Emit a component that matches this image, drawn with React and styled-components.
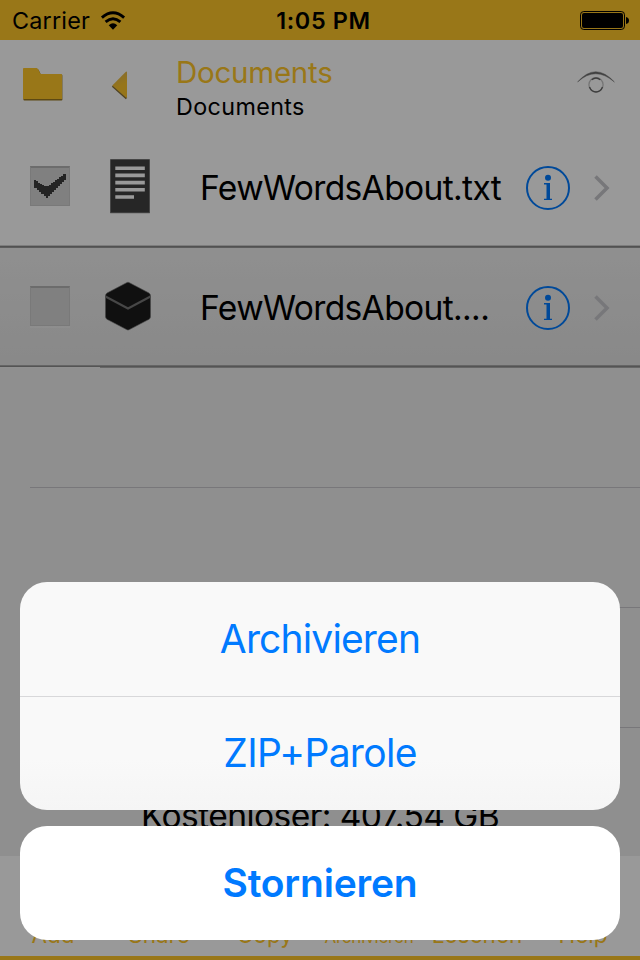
import React from "react";
import styled, { createGlobalStyle } from "styled-components";

const GlobalStyle = createGlobalStyle`
  * { box-sizing: border-box; }
  body { margin: 0; background: #999; }
  button { font: inherit; border: 0; padding: 0; background: none; }
`;

const gold = "#ffc628";

const Screen = styled.div`
  position: relative;
  width: 640px;
  height: 960px;
  overflow: hidden;
  display: flex;
  flex-direction: column;
  background: #efefef;
  color: #000;
  font-family: Inter, "Liberation Sans", sans-serif;
`;

const StatusBar = styled.div`
  height: 40px;
  flex: none;
  display: grid;
  grid-template-columns: 1fr auto 1fr;
  align-items: center;
  padding: 1px 10px 0 12px;
  background: ${gold};
  font-size: 23.4px;
  line-height: 40px;
`;

const Carrier = styled.div`
  display: flex;
  align-items: center;
  gap: 10px;
  letter-spacing: 0.2px;
`;

const Clock = styled.div`
  font-weight: 600;
  font-size: 23.4px;
  letter-spacing: 0.65px;
  margin-left: 5px;
`;

const BatterySlot = styled.div`
  display: flex;
  justify-content: flex-end;
`;

const Header = styled.header`
  height: 88px;
  flex: none;
  display: flex;
  align-items: flex-start;
  background: #fff;
  padding: 0 22px;
`;

const FolderSlot = styled.div`
  width: 88px;
  padding-top: 26px;
`;

const BackSlot = styled.div`
  width: 66px;
  padding-top: 30px;
`;

const Titles = styled.div`
  flex: 1;
  padding-top: 14px;
`;

const Title = styled.div`
  color: ${gold};
  font-size: 29.5px;
  line-height: 36px;
  letter-spacing: -0.24px;
`;

const Subtitle = styled.div`
  margin-top: 1px;
  font-size: 23.3px;
  line-height: 32px;
  letter-spacing: 0.38px;
`;

const EyeSlot = styled.div`
  padding: 29px 2px 0 0;
`;

const FileRow = styled.div`
  height: 120px;
  flex: none;
  display: flex;
  align-items: center;
  padding: 0 29px 0 30px;
  background: ${(p) => (p.$shaded ? "linear-gradient(#efefef, #e4e4e4)" : "#fff")};
`;

const RowRule = styled.div`
  height: 3px;
  flex: none;
  margin-top: -3px;
  z-index: 1;
  background: ${(p) =>
    p.$last
      ? "linear-gradient(90deg, #f1f1f1 100px, #aaa 100px) 0 2px / 100% 1px no-repeat, linear-gradient(#a8a8a8 0 1px, #8c8c8c 1px)"
      : "linear-gradient(#d0d0d0 0 1px, #888 1px 2px, #9a9a9a 2px)"};
`;

const Checkbox = styled.div`
  width: 40px;
  height: 40px;
  flex: none;
  margin-top: -4px;
  background: #d6d6d6;
  border: 1px solid #cacaca;
  border-top: 2px solid #b5b5b5;
  box-shadow: 0 2px 0 rgba(255, 255, 255, 0.22);
  svg { display: block; }
`;

const FileIcon = styled.div`
  width: 58px;
  height: 60px;
  margin: -4px 0 0 29px;
  flex: none;
  display: flex;
  justify-content: center;
  align-items: center;
`;

const FileName = styled.div`
  flex: 1;
  margin-left: 43px;
  font-size: 33.6px;
  line-height: 40px;
  letter-spacing: -0.65px;
  white-space: nowrap;
`;

const InfoSlot = styled.div`
  width: 44px;
  height: 44px;
  margin-right: 23px;
  flex: none;
`;

const ChevronSlot = styled.div`
  width: 18px;
  height: 28px;
  flex: none;
`;

const EmptyRow = styled.div`
  height: 120px;
  flex: none;
  margin-left: 30px;
  border-bottom: 1px solid #c8c7cc;
`;

const FreeSpace = styled.div`
  flex: 1;
  padding-top: 68px;
  text-align: center;
  font-size: 33.6px;
  line-height: 40px;
  letter-spacing: -0.6px;
  white-space: nowrap;
`;

const Toolbar = styled.nav`
  height: 104px;
  flex: none;
  display: grid;
  grid-template-columns: repeat(6, 106px);
  align-items: end;
  background: #fff;
  border-bottom: 4px solid ${gold};
  color: ${gold};
  text-align: center;
`;

const Tool = styled.div`
  font-size: ${(p) => (p.$small ? "17px" : "22.5px")};
  line-height: 30px;
  padding: ${(p) => (p.$small ? "0 4px 4px 0" : "0 0 6px")};
  letter-spacing: ${(p) => (p.$small ? "-0.2px" : "0")};
  white-space: nowrap;
`;

const Scrim = styled.div`
  position: absolute;
  inset: 0;
  z-index: 2;
  display: flex;
  flex-direction: column;
  justify-content: flex-end;
  gap: 16px;
  padding: 20px;
  background: rgba(0, 0, 0, 0.4);
`;

const SheetGroup = styled.div`
  display: flex;
  flex-direction: column;
  overflow: hidden;
  border-radius: 27px;
  background: ${(p) => (p.$solid ? "#fff" : "linear-gradient(#f9f9f9 78%, #f5f5f5)")};
`;

const SheetButton = styled.button`
  height: 114px;
  color: #007aff;
  font-size: 39px;
  font-weight: ${(p) => (p.$strong ? 600 : 400)};
  letter-spacing: ${(p) => (p.$strong ? "-0.2px" : "-0.85px")};
  padding-bottom: 1px;
  & + & {
    border-top: 1px solid #d8d8da;
    padding-bottom: 2px;
    letter-spacing: -0.7px;
  }
`;

const Wifi = () => (
  <svg width="26" height="20" viewBox="0 0 26 20" fill="none" stroke="#000">
    <path d="M1.9 6.7Q13-3 24.1 6.7" strokeWidth="2.9" />
    <path d="M5.6 10.9Q13 4.6 20.4 10.9" strokeWidth="2.9" />
    <path d="M8.7 14.2Q13 10.5 17.3 14.2L13 18.7Z" fill="#000" stroke="none" />
  </svg>
);

const Battery = () => (
  <svg width="50" height="20" viewBox="0 0 50 20">
    <rect x="0.5" y="0.5" width="44" height="18" rx="3.3" fill="none" stroke="#000" />
    <rect x="2" y="2" width="41" height="15" rx="2" />
    <path d="M46 6Q49 6.5 49 9.5T46 13Z" />
  </svg>
);

const Folder = () => (
  <svg width="42" height="38" viewBox="0 0 42 38">
    <path d="M1 3Q1 2 2 2H14Q15.5 2 16.3 3.5L18.5 8H39Q40 8 40 9V33.4Q40 34.2 39 34.2H2Q1 34.2 1 33.4Z" transform="translate(.4 .4)" fill="#9b7a20" />
    <path d="M1 3Q1 2 2 2H14Q15.5 2 16.3 3.5L18.5 8H39Q40 8 40 9V33H1Z" fill={gold} />
  </svg>
);

const Back = () => (
  <svg width="20" height="32" viewBox="0 0 20 32">
    <defs>
      <linearGradient id="backFill" x2="0.3" y2="1">
        <stop stopColor="#d5b05a" />
        <stop offset="0.65" stopColor="#fac32c" />
      </linearGradient>
    </defs>
    <path d="M2.5 16L16.5 28.5" stroke="#85703c" strokeWidth="2" />
    <path d="M2.3 15.5L15.6 2Q17 .8 17 2.5V27Q17 28.5 15.6 27.3Z" fill="url(#backFill)" />
  </svg>
);

const Eye = () => (
  <svg width="40" height="28" viewBox="0 0 40 28" fill="none">
    <path d="M1.6 13Q19.5-7.5 38.4 13Q19.5-3.5 1.6 13Z" fill="#6b6b6b" stroke="#777" strokeWidth=".5" />
    <circle cx="20" cy="15.8" r="7.1" stroke="#c4c4c4" strokeWidth="1.3" />
    <path d="M13.5 18Q15.5 23 20 23T26.5 18M15.7 10.8Q20 7.2 24.3 10.8" stroke="#666" strokeWidth="1.3" />
  </svg>
);

const Check = () => (
  <svg width="38" height="37" viewBox="0 0 38 37" shapeRendering="crispEdges">
    <path d="M3 12H5V13H7V15H9V16H11V17H13V18H18V17H20V15H22V14H24V12H26V11H28V9H30V8H32V6H35V12H33V14H31V16H29V18H27V20H25V22H23V24H21V26H19V28H17V30H15V28H13V26H10V24H8V22H6V20H3Z" fill="#3d3d3d" />
  </svg>
);

const TextDocument = () => (
  <svg width="46" height="56" viewBox="-5 -1 46 56">
    <rect x="0.6" y="0.6" width="38.8" height="53.2" fill="#404040" stroke="#666" strokeWidth=".8" />
    <path d="M5.3 9.3H34.8M5.3 16.4H34.8M5.3 23.6H34.8M5.3 30.8H34.8M5.3 38H24" stroke="#fff" strokeWidth="3.6" />
  </svg>
);

const ArchiveBox = () => (
  <svg width="50" height="54" viewBox="0 0 50 54">
    <path d="M24 3.5Q25 3 26 3.5L46 14Q47.5 15 47.5 17V37.5Q47.5 39.5 46 40.3L26 50.8Q25 51.3 24 50.8L4 40.3Q2.5 39.5 2.5 37.5V17Q2.5 15 4 14Z" fill="#1c1c1c" stroke="#777" strokeWidth=".6" />
    <path d="M2.5 17.5L25 29.5L47.5 17.5" fill="none" stroke="#777" strokeWidth="2" />
  </svg>
);

const Info = () => (
  <svg width="44" height="44" viewBox="0 0 44 44">
    <circle cx="22" cy="22" r="21" fill="none" stroke="#007aff" strokeWidth="2" />
    <circle cx="22" cy="11.8" r="3" fill="#007aff" />
    <path d="M18 17H24V32.7H26V34H18V32.7H20.5V18.5H18Z" fill="#007aff" />
  </svg>
);

const Chevron = () => (
  <svg width="18" height="28" viewBox="0 0 18 28" fill="none">
    <path d="M2.5 2.5L14 14L2.5 25.5" stroke="#c7c7cc" strokeWidth="3.6" />
  </svg>
);

const files = [
  { name: "FewWordsAbout.txt", checked: true, icon: <TextDocument /> },
  { name: "FewWordsAbout....", icon: <ArchiveBox />, shaded: true },
];

const tools = [
  { label: "Add" },
  { label: "Share" },
  { label: "Copy" },
  { label: "Archivieren", small: true },
  { label: "Löschen" },
  { label: "Help" },
];

export default function App() {
  return (
    <>
      <GlobalStyle />
      <Screen>
        <StatusBar>
          <Carrier>Carrier <Wifi /></Carrier>
          <Clock>1:05 PM</Clock>
          <BatterySlot><Battery /></BatterySlot>
        </StatusBar>
        <Header>
          <FolderSlot><Folder /></FolderSlot>
          <BackSlot><Back /></BackSlot>
          <Titles>
            <Title>Documents</Title>
            <Subtitle>Documents</Subtitle>
          </Titles>
          <EyeSlot><Eye /></EyeSlot>
        </Header>
        {files.map((file) => (
          <React.Fragment key={file.name}>
            <FileRow $shaded={file.shaded}>
              <Checkbox>{file.checked && <Check />}</Checkbox>
              <FileIcon>{file.icon}</FileIcon>
              <FileName>{file.name}</FileName>
              <InfoSlot><Info /></InfoSlot>
              <ChevronSlot><Chevron /></ChevronSlot>
            </FileRow>
            <RowRule $last={file.shaded} />
          </React.Fragment>
        ))}
        <EmptyRow />
        <EmptyRow />
        <EmptyRow />
        <FreeSpace>Kostenloser: 407.54 GB</FreeSpace>
        <Toolbar>
          {tools.map((tool) => (
            <Tool key={tool.label} $small={tool.small}>{tool.label}</Tool>
          ))}
        </Toolbar>
        <Scrim>
          <SheetGroup>
            <SheetButton>Archivieren</SheetButton>
            <SheetButton>ZIP+Parole</SheetButton>
          </SheetGroup>
          <SheetGroup $solid>
            <SheetButton $strong>Stornieren</SheetButton>
          </SheetGroup>
        </Scrim>
      </Screen>
    </>
  );
}
